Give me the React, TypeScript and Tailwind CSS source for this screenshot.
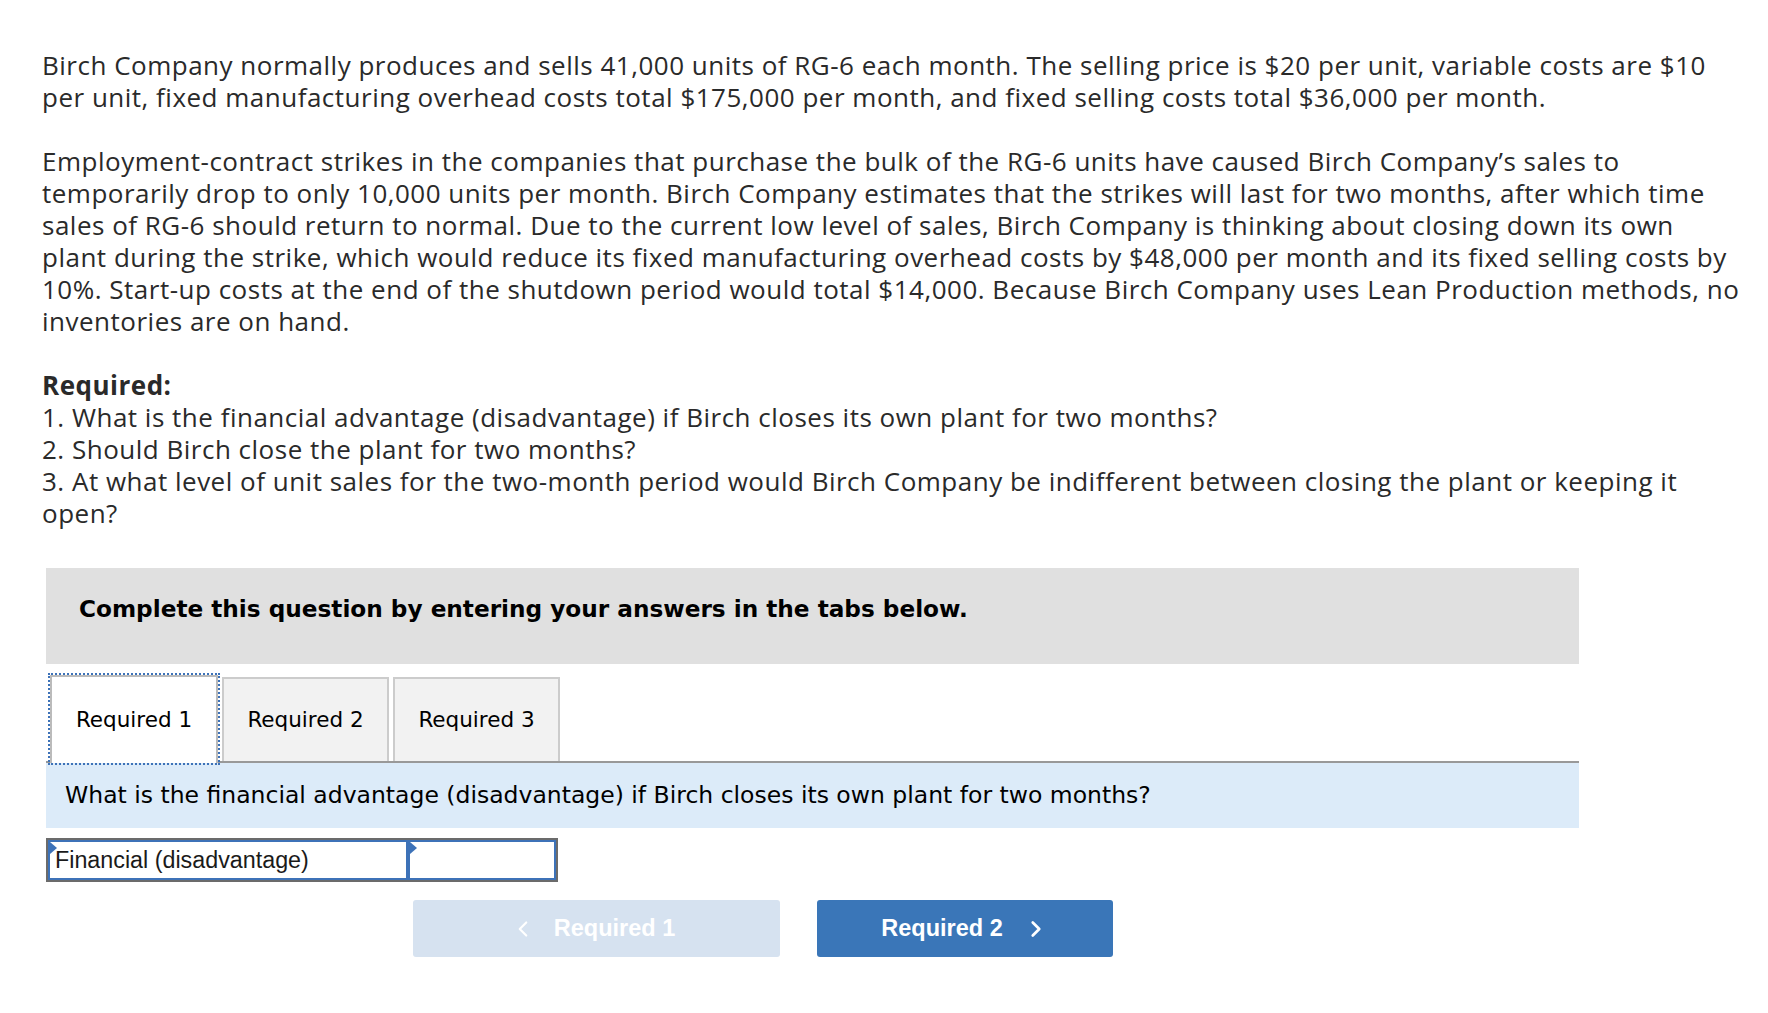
import { ChevronLeft, ChevronRight } from "lucide-react";

const body = "font-['Open_Sans','Noto_Sans',sans-serif]";
const verdana = "font-['DejaVu_Sans','Verdana',sans-serif]";
const arial = "font-['Liberation_Sans',Arial,sans-serif]";

function Cell({ children, className }: { children?: React.ReactNode; className: string }) {
  return (
    <div className={`relative h-full border-2 border-[#3d72b8] bg-white ${className}`}>
      <span className="absolute left-0 top-0 h-0 w-0 border-y-[6px] border-l-[7px] border-y-transparent border-l-[#3d72b8]" />
      {children}
    </div>
  );
}

export default function App() {
  return (
    <div className="min-h-screen bg-white pl-[42px] pr-[20px] pt-[49px] text-[#2a2a2a]">
      <div className={`${body} whitespace-nowrap text-[26px] leading-[32px] tracking-[0.5px]`}>
        <p>
          Birch Company normally produces and sells 41,000 units of RG-6 each month. The selling price is $20 per unit, variable costs are $10
          <br />
          per unit, fixed manufacturing overhead costs total $175,000 per month, and fixed selling costs total $36,000 per month.
        </p>
        <p className="mt-[32px]">
          Employment-contract strikes in the companies that purchase the bulk of the RG-6 units have caused Birch Company’s sales to
          <br />
          temporarily drop to only 10,000 units per month. Birch Company estimates that the strikes will last for two months, after which time
          <br />
          sales of RG-6 should return to normal. Due to the current low level of sales, Birch Company is thinking about closing down its own
          <br />
          plant during the strike, which would reduce its fixed manufacturing overhead costs by $48,000 per month and its fixed selling costs by
          <br />
          10%. Start-up costs at the end of the shutdown period would total $14,000. Because Birch Company uses Lean Production methods, no
          <br />
          inventories are on hand.
        </p>
        <div className="mt-[32px]">
          <p className="font-bold">Required:</p>
          <p>1. What is the financial advantage (disadvantage) if Birch closes its own plant for two months?</p>
          <p>2. Should Birch close the plant for two months?</p>
          <p>
            3. At what level of unit sales for the two-month period would Birch Company be indifferent between closing the plant or keeping it
            <br />
            open?
          </p>
        </div>
      </div>

      <div className="ml-[4px] mt-[39px] w-[1533px]">
        <div className={`${verdana} flex h-[96px] items-center bg-[#e0e0e0] pl-[33px] pb-[14px] text-[23.2px] font-bold text-black`}>
          Complete this question by entering your answers in the tabs below.
        </div>

        <div className={`${verdana} mt-[13px] flex h-[86px] items-end gap-[4px] border-b-2 border-[#999] pl-[4px] text-[21.5px] text-black`}>
          <div className="-mb-[2px] flex h-[88px] w-[168px] items-center justify-center border-2 border-b-0 border-[#bbb] bg-white outline-2 outline-dotted outline-[#3d72b8]">
            Required 1
          </div>
          <div className="flex h-full w-[167px] items-center justify-center border-2 border-b-0 border-[#ccc] bg-[#f2f2f2]">
            Required 2
          </div>
          <div className="flex h-full w-[167px] items-center justify-center border-2 border-b-0 border-[#ccc] bg-[#f2f2f2]">
            Required 3
          </div>
        </div>

        <div className={`${verdana} flex h-[65px] items-center bg-[#dcebf9] pl-[19px] text-[23.5px] text-black`}>
          What is the financial advantage (disadvantage) if Birch closes its own plant for two months?
        </div>

        <div className="mt-[10px] flex h-[44px] w-[512px] border-2 border-[#6b6b6b]">
          <Cell className={`${arial} flex w-[360px] items-center pl-[5px] text-[23.3px] text-[#1a1a1a]`}>
            Financial (disadvantage)
          </Cell>
          <Cell className="flex-1" />
        </div>

        <div className={`${arial} ml-[367px] mt-[18px] flex gap-[37px] text-[23.5px] font-bold text-white`}>
          <div className="flex h-[57px] w-[367px] items-center justify-center gap-[18px] rounded-[3px] bg-[#d6e2f0] pr-[8px]">
            <ChevronLeft size={26} strokeWidth={2} />
            <span>Required 1</span>
          </div>
          <div className="flex h-[57px] w-[296px] items-center justify-center gap-[20px] rounded-[3px] bg-[#3a76b8]">
            <span>Required 2</span>
            <ChevronRight size={26} strokeWidth={2.5} />
          </div>
        </div>
      </div>
    </div>
  );
}
